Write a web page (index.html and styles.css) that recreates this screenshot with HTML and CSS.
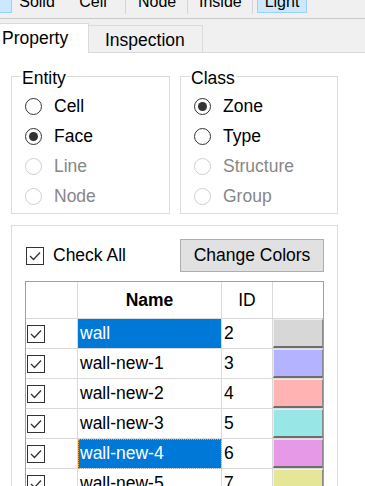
FILE: index.html
```html
<!DOCTYPE html>
<html lang="en">
  <head>
    <meta charset="UTF-8" />
    <meta name="viewport" content="width=device-width, initial-scale=1.0" />
    <title>Property</title>
    <link rel="stylesheet" href="styles.css">
  </head>
  <body>
    <div class="toolbar">
      <div class="tool-row">
        <div class="tool-btn on edge"></div>
        <div class="tool-btn t-solid">Solid</div>
        <div class="tool-btn t-cell">Cell</div>
        <div class="tool-sep s-1"></div>
        <div class="tool-btn t-node">Node</div>
        <div class="tool-sep s-2"></div>
        <div class="tool-btn t-inside">Inside</div>
        <div class="tool-sep s-3"></div>
        <div class="tool-btn on t-light">Light</div>
      </div>
    </div>

    <div class="tabs">
      <div class="tab active">Property</div>
      <div class="tab">Inspection</div>
    </div>

    <div class="page">
      <div class="groups">
        <div class="group entity-box">
          <div class="group-title">Entity</div>
          <div class="radio-list">
            <div class="radio"><span class="dot"></span>Cell</div>
            <div class="radio checked"><span class="dot"></span>Face</div>
            <div class="radio off"><span class="dot"></span>Line</div>
            <div class="radio off"><span class="dot"></span>Node</div>
          </div>
        </div>
        <div class="group class-box">
          <div class="group-title">Class</div>
          <div class="radio-list">
            <div class="radio checked"><span class="dot"></span>Zone</div>
            <div class="radio"><span class="dot"></span>Type</div>
            <div class="radio off"><span class="dot"></span>Structure</div>
            <div class="radio off"><span class="dot"></span>Group</div>
          </div>
        </div>
      </div>

      <div class="group list-box">
        <div class="list-top">
          <label class="check-all">
            <span class="check"><svg width="16" height="16" viewBox="0 0 16 16"><polyline points="3,8 6.5,11.5 13,4.5" fill="none" stroke="#333" stroke-width="1.3"/></svg></span>
            Check All
          </label>
          <button class="btn">Change Colors</button>
        </div>
        <div class="grid">
          <div class="grid-row grid-head">
            <div></div>
            <div>Name</div>
            <div>ID</div>
            <div></div>
          </div>
          <!-- rows added by script -->
        </div>
      </div>
    </div>

    <script>
      var zones = [
        { name: "wall", id: 2, color: "#d7d7d7", sel: true },
        { name: "wall-new-1", id: 3, color: "#b3b3ff" },
        { name: "wall-new-2", id: 4, color: "#ffb3b3" },
        { name: "wall-new-3", id: 5, color: "#99e6e6" },
        { name: "wall-new-4", id: 6, color: "#e699e6", sel: true, focus: true },
        { name: "wall-new-5", id: 7, color: "#e6e699" },
        { name: "wall-new-6", id: 8, color: "#b3e6b3" },
      ];
      var grid = document.querySelector(".grid");
      var tick =
        '<span class="check"><svg width="16" height="16" viewBox="0 0 16 16"><polyline points="3,8 6.5,11.5 13,4.5" fill="none" stroke="#333" stroke-width="1.3"/></svg></span>';
      var str = ``;
      zones.forEach(function (item) {
        var cls = "cell-name" + (item.sel ? " sel" : "") + (item.focus ? " focus" : "");
        str += `<div class="grid-row">
            <div class="cell-check">${tick}</div>
            <div class="${cls}">${item.name}</div>
            <div class="cell-id">${item.id}</div>
            <div class="cell-color"><span class="swatch" style="background: ${item.color};"></span></div>
          </div>`;
      });
      grid.insertAdjacentHTML("beforeend", str);
    </script>
  </body>
</html>
```
FILE: styles.css
```css
* {
  padding: 0;
  margin: 0;
  box-sizing: border-box;
}
html,
body {
  overflow: hidden;
}
body {
  width: 365px;
  height: 486px;
  background: #fff;
  color: #000;
  font-family: "Liberation Sans", Arial, sans-serif;
  font-size: 17.5px;
}

/* toolbar, cut off at the top */
.toolbar {
  height: 19px;
  background: #f0f0f0;
  border-bottom: 1px solid #c9c9c9;
  overflow: hidden;
}
.tool-row {
  display: flex;
  margin-top: -17px;
  font-size: 16px;
}
.tool-btn {
  height: 30px;
  padding: 10px 5px 0;
  line-height: 16px;
  text-align: center;
  border: 1px solid transparent;
  white-space: nowrap;
}
.tool-btn.on {
  background: #cce8ff;
  border-color: #99d1ff;
}
.tool-sep {
  width: 1px;
  height: 31px;
  background: #d4d4d4;
}
.edge {
  width: 13px;
  margin-left: -1px;
}
.t-solid {
  width: 48px;
  margin-left: 1px;
}
.t-cell {
  width: 40px;
  margin-left: 12px;
}
.s-1 {
  margin-left: 12px;
}
.t-node {
  width: 49px;
  margin-left: 6px;
}
.s-2 {
  margin-left: 6px;
}
.t-inside {
  width: 53px;
  margin-left: 5px;
}
.s-3 {
  margin-left: 6px;
}
.t-light {
  width: 50px;
  margin-left: 4px;
}

/* tabs */
.tabs {
  display: flex;
  align-items: flex-end;
  height: 34px;
  background: #f0f0f0;
  border-bottom: 1px solid #dadada;
}
.tab {
  width: 114px;
  height: 27px;
  padding: 4px 0 0 16px;
  line-height: 20px;
  border-top: 1px solid #dadada;
  border-right: 1px solid #dadada;
}
.tab.active {
  width: 89px;
  height: 30px;
  padding-left: 2px;
  margin-bottom: -1px;
  background: #fff;
}

/* page */
.page {
  padding: 23px 0 0 11px;
}
.groups {
  display: flex;
  gap: 10px;
}
.group {
  border: 1px solid #dcdcdc;
}
.groups .group {
  height: 138px;
}
.entity-box {
  width: 159px;
}
.class-box {
  width: 158px;
}
.group-title {
  width: fit-content;
  margin: -7px 0 0 9px;
  padding: 0 1px;
  line-height: 17px;
  background: #fff;
}
.radio-list {
  margin-top: 4px;
}
.radio {
  display: flex;
  align-items: center;
  height: 30px;
  line-height: 30px;
  padding-left: 13px;
}
.radio .dot {
  width: 17px;
  height: 17px;
  margin-right: 12px;
  border: 1px solid #333;
  border-radius: 50%;
  display: flex;
  align-items: center;
  justify-content: center;
}
.radio.checked .dot::after {
  content: "";
  width: 9px;
  height: 9px;
  border-radius: 50%;
  background: #333;
}
.radio.off {
  color: #878787;
}
.radio.off .dot {
  border-color: #cfcfcf;
}

/* list */
.list-box {
  width: 327px;
  height: 400px;
  margin-top: 11px;
  padding: 13px 13px 0;
}
.list-top {
  display: flex;
  justify-content: space-between;
  align-items: center;
  height: 33px;
}
.check-all {
  display: flex;
  align-items: center;
  padding-left: 1px;
}
.check {
  width: 18px;
  height: 18px;
  border: 1px solid #333;
  background: #fff;
  margin-right: 9px;
  flex: none;
}
.check svg {
  display: block;
}
.btn {
  width: 144px;
  height: 33px;
  border: 1px solid #adadad;
  background: #e1e1e1;
  font: inherit;
  color: #000;
}
.grid {
  margin-top: 9px;
  border: 1px solid #a0a0a0;
}
.grid-row {
  display: grid;
  grid-template-columns: 52px 144px 51px 50px;
}
.grid-row > div {
  height: 30px;
  display: flex;
  align-items: center;
  border-right: 1px solid #dadada;
  border-bottom: 1px solid #dadada;
  white-space: nowrap;
}
.grid-row > div:last-child {
  border-right: none;
}
.grid-head > div {
  height: 37px;
  justify-content: center;
  font-weight: bold;
}
.grid-head > div:nth-child(3) {
  font-weight: normal;
}
.cell-check {
  padding-left: 1px;
}
.cell-name,
.cell-id {
  padding-left: 2px;
}
.cell-name.sel {
  background: #0078d7;
  color: #fff;
}
.cell-name.focus {
  outline: 1px dotted #f5a33a;
  outline-offset: -1px;
}
.grid-row > .cell-color {
  align-items: stretch;
}
.swatch {
  width: 100%;
  border-top: 1px solid rgba(255, 255, 255, 0.6);
  border-left: 1px solid rgba(255, 255, 255, 0.6);
  border-right: 1px solid #8a8a8a;
  border-bottom: 2px solid #6d6d6d;
}
```
